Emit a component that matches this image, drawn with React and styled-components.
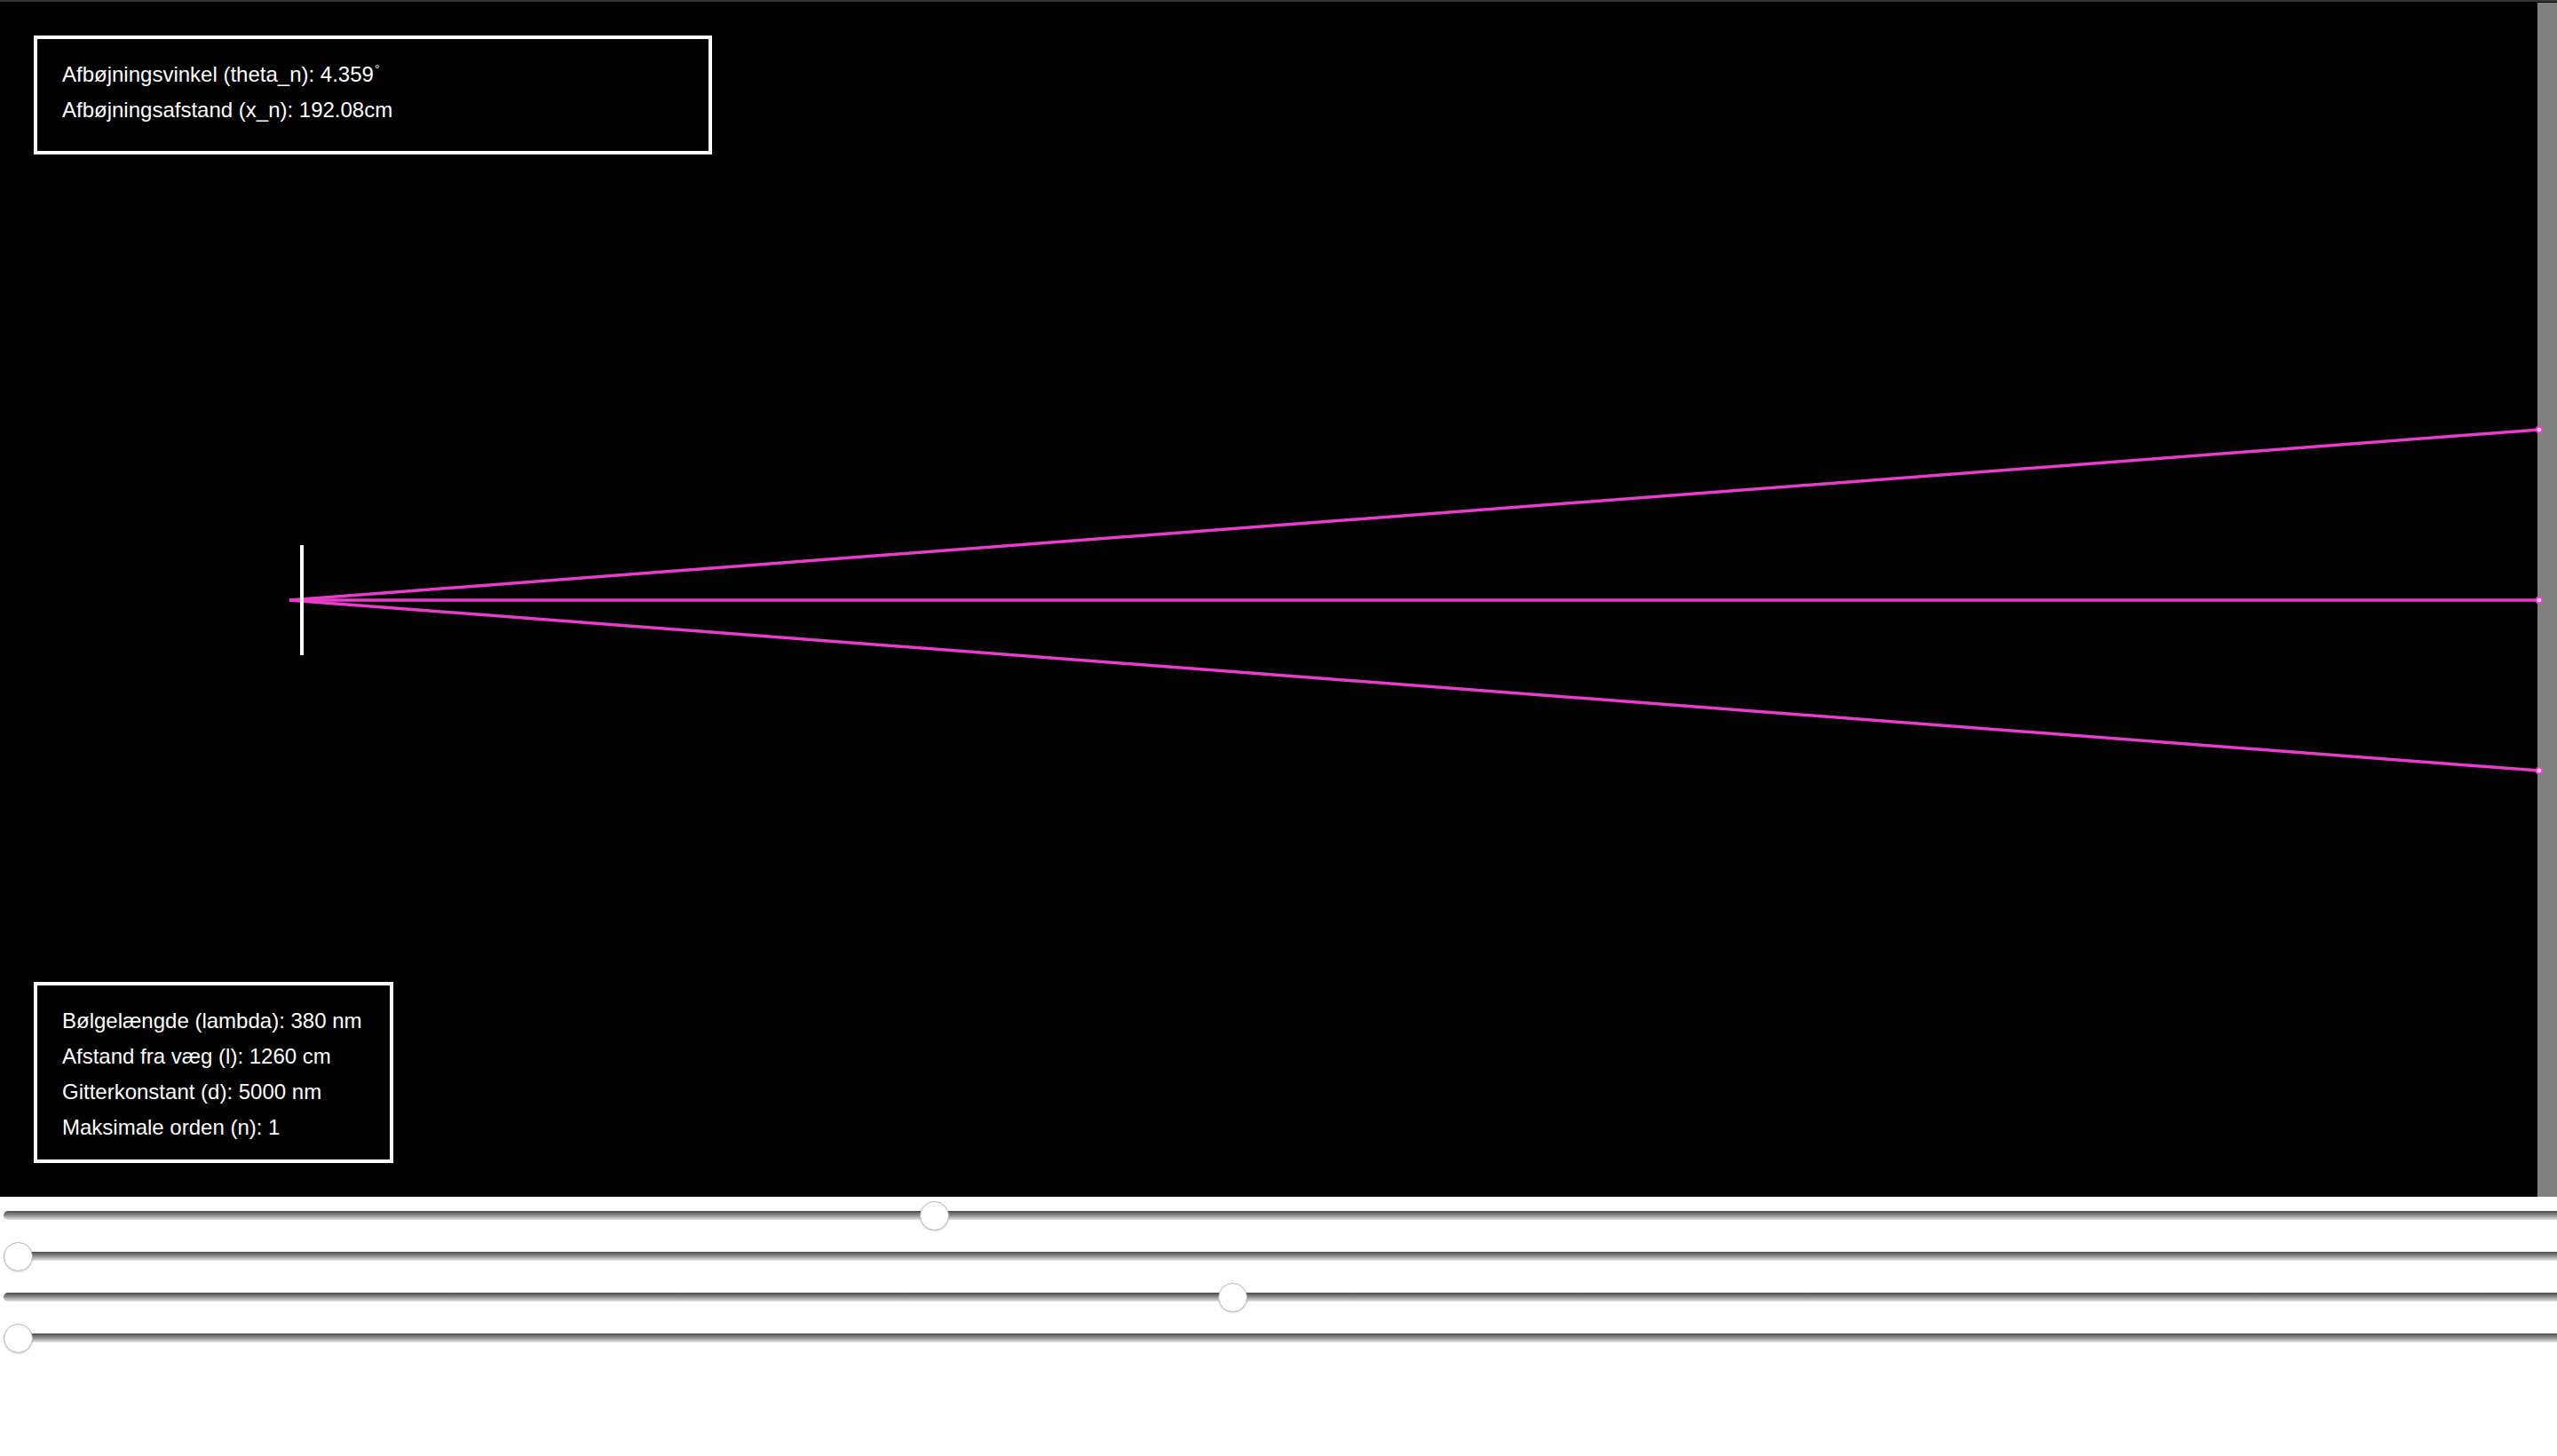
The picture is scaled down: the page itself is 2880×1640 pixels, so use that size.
import { useState } from "react";
import styled, { createGlobalStyle } from "styled-components";

const GlobalStyle = createGlobalStyle`
  html, body {
    margin: 0;
    padding: 0;
    background: #ffffff;
  }
  body {
    font-family: "Liberation Sans", Arial, sans-serif;
  }
`;

const PINK = "#e73dca";

function App() {
  const [lambda, setLambda] = useState(380);
  const [distance, setDistance] = useState(1260);
  const [gratingConst, setGratingConst] = useState(5000);
  const [order, setOrder] = useState(1);

  // sin(theta) = n * lambda / d
  const ratio = gratingConst > 0 ? (order * lambda) / gratingConst : 2;
  const theta = ratio <= 1 ? Math.asin(ratio) : NaN;
  const thetaDeg = (theta * 180) / Math.PI;
  const xn = 2 * distance * Math.tan(theta);

  const width = 2880;
  const height = 1346;
  const cy = height / 2 + 1;
  const gratingX = 340;
  const wallX = 2858;
  const hitX = 2860;

  const beams = [0];
  for (let k = 1; k <= order; k++) {
    const s = (k * lambda) / gratingConst;
    if (s < 1) {
      const off = 2 * distance * Math.tan(Math.asin(s));
      beams.push(-off, off);
    }
  }

  return (
    <>
      <GlobalStyle />
      <Page>
        <TopStrip />
        <Stage>
          <Drawing viewBox={`0 0 ${width} ${height}`} preserveAspectRatio="none">
            <rect x={wallX} y={1} width={width - wallX} height={height} fill="#808080" />
            {beams.map((off, i) => (
              <line
                key={"l" + i}
                x1={326}
                y1={cy}
                x2={hitX}
                y2={cy + off}
                stroke={PINK}
                strokeWidth={3.5}
              />
            ))}
            <rect x={gratingX - 2} y={cy - 62} width={4} height={124} fill="#ffffff" />
            {beams.map((off, i) => (
              <circle
                key={"c" + i}
                cx={hitX}
                cy={cy + off}
                r={3.5}
                fill="#f6c0ee"
                stroke={PINK}
                strokeWidth={2}
              />
            ))}
          </Drawing>

          <ResultBox>
            <InfoLine>
              Afbøjningsvinkel (theta_n): {isNaN(thetaDeg) ? "–" : thetaDeg.toFixed(3)}
              <Degree>°</Degree>
            </InfoLine>
            <InfoLine>
              Afbøjningsafstand (x_n): {isNaN(xn) ? "–" : xn.toFixed(2)}cm
            </InfoLine>
          </ResultBox>

          <ParamBox>
            <InfoLine>Bølgelængde (lambda): {lambda} nm</InfoLine>
            <InfoLine>Afstand fra væg (l): {distance} cm</InfoLine>
            <InfoLine>Gitterkonstant (d): {gratingConst} nm</InfoLine>
            <InfoLine>Maksimale orden (n): {order}</InfoLine>
          </ParamBox>
        </Stage>

        <Controls>
          <Slider min={200} max={700} step={1} value={lambda} onChange={(e) => setLambda(+e.target.value)} />
          <Slider min={1260} max={5000} step={10} value={distance} onChange={(e) => setDistance(+e.target.value)} />
          <Slider min={0} max={10480} step={10} value={gratingConst} onChange={(e) => setGratingConst(+e.target.value)} />
          <Slider min={1} max={10} step={1} value={order} onChange={(e) => setOrder(+e.target.value)} />
        </Controls>
      </Page>
    </>
  );
}

export default App;

const Page = styled.div`
  width: 100vw;
  min-height: 100vh;
  overflow: hidden;
  background: #ffffff;
`;

const TopStrip = styled.div`
  height: 2px;
  background: #353535;
`;

const Stage = styled.div`
  position: relative;
  height: 1346px;
  background: #000000;
`;

const Drawing = styled.svg`
  display: block;
  width: 100%;
  height: 100%;
`;

const Box = styled.div`
  position: absolute;
  left: 38px;
  box-sizing: border-box;
  border: 4px solid #ffffff;
  background: #000000;
  color: #ffffff;
  font-family: "Liberation Sans", Arial, sans-serif;
  font-size: 24px;
`;

const ResultBox = styled(Box)`
  top: 38px;
  width: 764px;
  height: 134px;
  padding: 20px 28px 0 28px;
`;

const ParamBox = styled(Box)`
  bottom: 38px;
  height: 204px;
  padding: 20px 31px 0 28px;
`;

const InfoLine = styled.div`
  line-height: 40px;
  white-space: nowrap;
`;

const Degree = styled.span`
  font-size: 14px;
  line-height: 0;
  vertical-align: 9px;
  margin-left: 1px;
`;

const Controls = styled.div`
  display: flex;
  flex-direction: column;
  gap: 12px;
  padding: 4px 0 0 4px;
`;

const Slider = styled.input.attrs({ type: "range" })`
  -webkit-appearance: none;
  appearance: none;
  display: block;
  width: 2900px;
  height: 34px;
  margin: 0;
  padding: 0;
  background: transparent;
  outline: none;

  &::-webkit-slider-runnable-track {
    height: 10px;
    border-radius: 5px;
    background: linear-gradient(to bottom, #4a4a4a 0%, #8a8a8a 45%, #e4e4e4 100%);
  }

  &::-webkit-slider-thumb {
    -webkit-appearance: none;
    appearance: none;
    width: 33px;
    height: 33px;
    margin-top: -11.5px;
    border-radius: 50%;
    background: #ffffff;
    border: 1px solid #b8b8b8;
    box-shadow: 0 1px 2px rgba(0, 0, 0, 0.15);
    box-sizing: border-box;
  }
`;
